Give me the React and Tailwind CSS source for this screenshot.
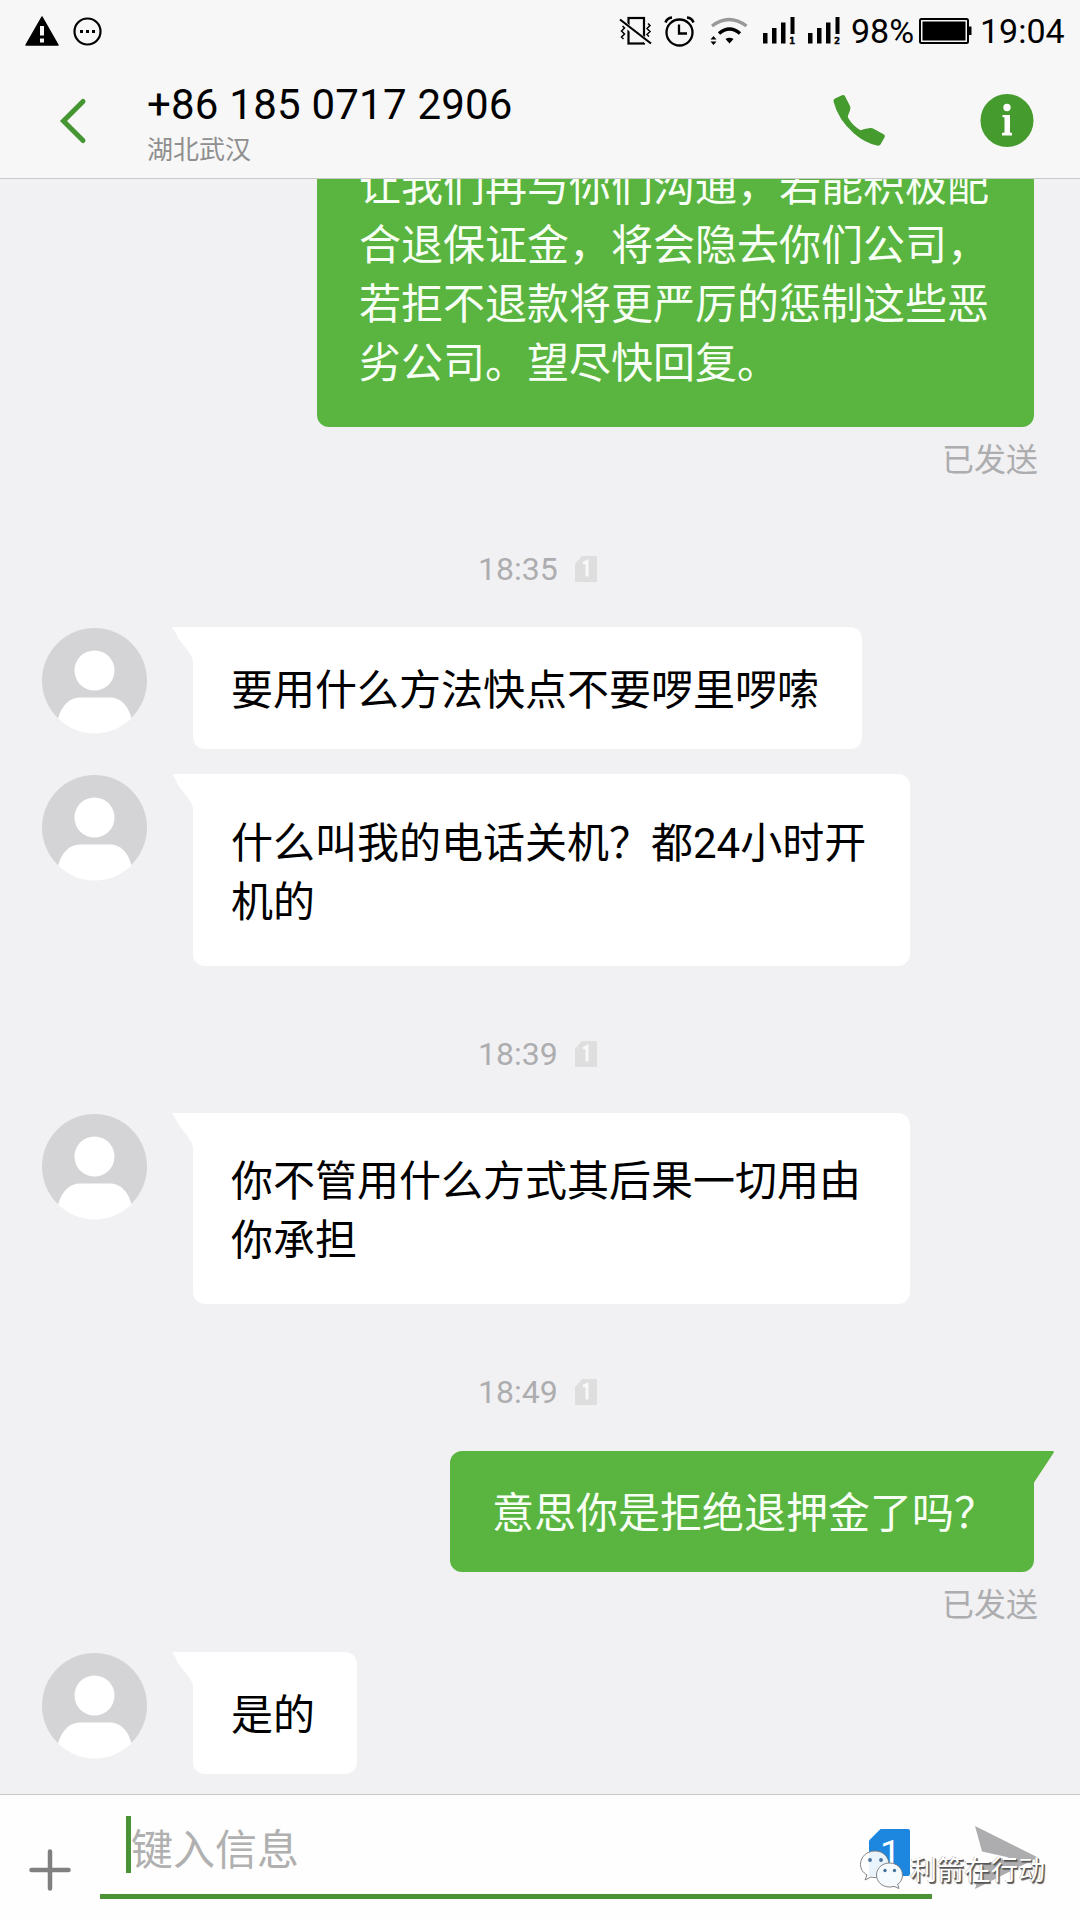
const messages = [
  {
    type: "out",
    text: "让我们再与你们沟通，若能积极配\n合退保证金，将会隐去你们公司，\n若拒不退款将更严厉的惩制这些恶\n劣公司。望尽快回复。",
    box: "-mt-[62px] w-[717px] h-[310px] pt-[40px] pl-[42px]",
  },
  { type: "time", text: "18:35", box: "mt-[72px]" },
  {
    type: "in",
    text: "要用什么方法快点不要啰里啰嗦",
    row: "mt-[41px]",
    box: "w-[669px] h-[122px] pt-[34px]",
  },
  {
    type: "in",
    text: "什么叫我的电话关机？都24小时开\n机的",
    row: "mt-[25px]",
    box: "w-[717px] h-[192px] pt-[40px]",
  },
  { type: "time", text: "18:39", box: "mt-[71px]" },
  {
    type: "in",
    text: "你不管用什么方式其后果一切用由\n你承担",
    row: "mt-[42px]",
    box: "w-[717px] h-[191px] pt-[39px]",
  },
  { type: "time", text: "18:49", box: "mt-[71px]" },
  {
    type: "out",
    text: "意思你是拒绝退押金了吗？",
    box: "mt-[42px] w-[584px] h-[121px] pt-[33px] pl-[42px]",
    tail: true,
  },
  {
    type: "in",
    text: "是的",
    row: "mt-[27px]",
    box: "w-[164px] h-[122px] pt-[34px]",
  },
];

function VibrateOff() {
  return (
    <svg width="34" height="30" viewBox="0 0 34 30" fill="none" stroke="#000">
      <rect x="9.5" y="2" width="15.5" height="25.5" strokeWidth="2.2" />
      <path d="M0 4 L31 28" stroke="#f7f7f7" strokeWidth="5" />
      <path d="M1 3.5 L32 27.5" strokeWidth="2.2" />
      <path d="M3.5 10l2 2-3 3 3 3-3 3 2 2M29 7.5l2 2-3 3 3 3-3 3 2 2" strokeWidth="1.5" />
    </svg>
  );
}

function AlarmClock() {
  return (
    <svg width="31" height="31" viewBox="0 0 31 31" fill="none" stroke="#000">
      <circle cx="15.5" cy="16.5" r="13" strokeWidth="2.3" />
      <path d="M15 8.5v9h8" strokeWidth="2.3" />
      <path d="M1.5 6.5Q3 2 8 1.5M29.5 6.5Q28 2 23 1.5" strokeWidth="2.6" />
    </svg>
  );
}

function Wifi() {
  return (
    <svg width="38" height="28" viewBox="0 0 38 28" fill="none">
      <path d="M2 9Q19-4 36.5 9" stroke="#999" strokeWidth="3.2" />
      <path d="M9 16.5Q19.5 7.5 30 16.5" stroke="#000" strokeWidth="3.6" />
      <path d="M15.5 22Q19.5 19.5 23.5 22L19.5 26.5Z" fill="#000" />
      <path d="M.5 22.5L3.5 19L6.5 22.5ZM.5 24.5H6.5L3.5 28Z" fill="#000" />
    </svg>
  );
}

function Signal({ sim }) {
  return (
    <svg width="34" height="28" viewBox="0 0 34 28" fill="#000">
      <rect x="1" y="16" width="4.5" height="10.5" />
      <rect x="10" y="11" width="4.5" height="15.5" />
      <rect x="19" y="5.5" width="4.5" height="21" />
      <rect x="28.5" y="0" width="4" height="17" />
      <text
        x="27.3"
        y="26.5"
        fontSize="9.5"
        fontWeight="700"
        fontFamily="DejaVu Sans Mono, monospace"
        stroke="#000"
        strokeWidth=".5"
      >
        {sim}
      </text>
    </svg>
  );
}

function Battery() {
  return (
    <svg width="53" height="26" viewBox="0 0 53 26">
      <rect x="1" y="1" width="48" height="24" rx="1.5" fill="none" stroke="#000" strokeWidth="2" />
      <rect x="3.5" y="3.5" width="43" height="19" fill="#000" />
      <rect x="49" y="8.5" width="3.5" height="8.5" fill="#000" />
    </svg>
  );
}

function StatusBar() {
  return (
    <div className="flex h-[62px] items-center pl-[25px] pr-[15px] text-[34px] leading-none text-black">
      <svg width="34" height="30" viewBox="0 0 34 30">
        <path d="M17 1 L33 29 H1 Z" fill="#000" stroke="#000" strokeWidth="1.5" strokeLinejoin="round" />
        <path d="M17 10v9.5M17 22.5v4" stroke="#f7f7f7" strokeWidth="4" />
      </svg>
      <svg className="ml-[14px]" width="29" height="29" viewBox="0 0 29 29">
        <circle cx="14.5" cy="14.5" r="13" fill="none" stroke="#000" strokeWidth="2.2" />
        <path d="M7 13h3v3H7zM13 13h3v3h-3zM19 13h3v3h-3z" fill="#000" />
      </svg>
      <div className="ml-auto flex items-center">
        <VibrateOff />
        <div className="ml-[11px]"><AlarmClock /></div>
        <div className="ml-[15px]"><Wifi /></div>
        <div className="ml-[14px]"><Signal sim="1" /></div>
        <div className="ml-[11px]"><Signal sim="2" /></div>
        <span className="ml-[10px] w-[63px]">98%</span>
        <div className="ml-[5px]"><Battery /></div>
        <span className="ml-[8px] w-[85px]">19:04</span>
      </div>
    </div>
  );
}

function Header() {
  return (
    <div className="flex h-[117px] border-b border-[#c9c9cb]">
      <svg className="ml-[59px] mt-[35px]" width="28" height="48" viewBox="0 0 28 48" fill="none">
        <path d="M24 4.500 L4.500 24 L24 43.500" stroke="#459532" strokeWidth="5" strokeLinecap="round" />
      </svg>
      <div className="ml-[60px] flex flex-col">
        <div className="mt-[18px] text-[42px] leading-[50px] tracking-[0.22px] text-black">+86 185 0717 2906</div>
        <div className="mt-[4px] text-[26px] leading-[32px] text-[#8f8f8f]">湖北武汉</div>
      </div>
      <svg className="ml-auto mt-[32px]" width="56" height="54" viewBox="0 0 56 54">
        <path
          d="M1.5 7.500Q1 5.500 3 4.500L10 1.200Q12 .500 13 2.200L18 12Q19 14.500 18 16.500L16 21.500Q15.500 23 16.500 24.500Q21 32 28.500 36.200L32.500 35Q36 34.500 38 34Q40 33.800 42 35L52 40.500Q53.500 41.500 52.500 43.500L48.500 50.500Q47.500 52 45 51.500Q33 49 22 39.500Q6 25.500 1.500 7.500Z"
          fill="#459b2e"
        />
      </svg>
      <svg className="ml-[92px] mr-[46px] mt-[31px]" width="54" height="54" viewBox="0 0 54 54">
        <circle cx="27" cy="27.500" r="26.500" fill="#459b2e" />
        <circle cx="27" cy="14.500" r="3.700" fill="#fff" />
        <path d="M22.500 22H30V39.500L32 40V42.500H22V40L24.500 39.500V24.500L22.500 24Z" fill="#fff" />
      </svg>
    </div>
  );
}

function Avatar() {
  return (
    <svg className="ml-[42px]" width="105" height="107" viewBox="0 0 105 107">
      <circle cx="52.5" cy="53.5" r="52.5" fill="#d4d4d6" />
      <circle cx="52.5" cy="43.5" r="20" fill="#fff" />
      <path d="M16 91.5C20 77 29 70.5 38 70.5H68C77 70.5 86 77 89.5 91.5Q73 106.5 52.5 106.5Q32 106.5 16 91.5Z" fill="#fff" />
    </svg>
  );
}

function SentBubble({ message }) {
  return (
    <div className="flex flex-col items-end pr-[46px]">
      <div
        className={`relative rounded-[12px] bg-[#59b440] text-[42px] leading-[59px] whitespace-pre text-[#f8fff4] ${message.box}`}
      >
        {message.text}
        {message.tail && (
          <svg className="absolute top-0 -right-[20px]" width="40" height="32" viewBox="0 0 40 32">
            <path d="M0 0H38.5Q40.5 0 39.5 2L20 31.5H0Z" fill="#59b440" />
          </svg>
        )}
      </div>
      <div className="mt-[13px] -mr-[4px] text-[32px] leading-[40px] text-[#adadaf]">已发送</div>
    </div>
  );
}

function ReceivedBubble({ message }) {
  return (
    <div className={`flex items-start ${message.row}`}>
      <Avatar />
      <div
        className={`relative ml-[46px] rounded-[12px] bg-white pl-[38px] text-[42px] leading-[59px] whitespace-pre text-black ${message.box}`}
      >
        <svg className="absolute top-0 -left-[21px]" width="40" height="34" viewBox="0 0 40 34">
          <path d="M0 0H40V34H21Q20 29 16 24L6 11Q3 4 0 0Z" fill="#fff" />
        </svg>
        <span className="relative">{message.text}</span>
      </div>
    </div>
  );
}

function TimeLabel({ message }) {
  return (
    <div className={`flex h-[34px] items-center pl-[478px] text-[32px] leading-[34px] text-[#adadaf] ${message.box}`}>
      <span className="w-[97px]">{message.text}</span>
      <svg width="22" height="26" viewBox="0 0 22 26">
        <path d="M7 0H22V26H0V8Z" fill="#dededf" />
        <path d="M8 7.5L12 5.5V20.5" fill="none" stroke="#f8f8f9" strokeWidth="3" />
      </svg>
    </div>
  );
}

function Composer() {
  return (
    <div className="relative flex h-[126px] border-t border-[#c9c9cb] bg-[#fefefe]">
      <svg className="ml-[29px] mt-[54px]" width="42" height="42" viewBox="0 0 42 42">
        <path d="M21 2.5V39.5M2.500 21H39.5" stroke="#808080" strokeWidth="4.5" strokeLinecap="round" />
      </svg>
      <div className="ml-[29px] flex h-[104px] w-[832px] border-b-[5px] border-[#4a9236]">
        <div className="ml-[26px] mt-[21px] h-[57px] w-[5px] bg-[#4a9236]" />
        <div className="mt-[26px] text-[42px] leading-[59px] text-[#b0b0b0]">键入信息</div>
        <svg className="ml-auto mr-[21px] mt-[34px]" width="42" height="48" viewBox="0 0 42 48">
          <path d="M11.5 0H39Q41 0 41 2V45Q41 47 39 47H2Q0 47 0 45V11.5Z" fill="#1d87df" />
          <text x="11" y="37" fontSize="37" fontFamily="Roboto, sans-serif" fill="#fff">1</text>
        </svg>
      </div>
      <svg className="ml-[43px] mt-[31px]" width="64" height="64" viewBox="0 0 64 64">
        <path d="M0 0L63 31.5L0 63L7 38.5L34 31.5L7 25.5Z" fill="#adadaf" />
      </svg>

      {/* account watermark */}
      <div className="absolute left-[859px] top-[54px] flex items-start">
        <svg width="46" height="42" viewBox="0 0 46 42">
          <g stroke="#777" strokeWidth=".9">
            <path d="M16 2C7.5 2 1.5 8 1.5 15.5C1.5 20 4 23.5 8 26L6 31L12 28Q14 28.5 16 28.5C25 28.5 30 22.5 30 15.5C30 8 24 2 16 2Z" fill="#fff" fillOpacity=".9" />
            <path d="M30.5 14C23 14 17.5 19.5 17.5 26C17.5 32.5 23 38 30.5 38Q33 38 35 37.3L40 39.5L38.7 35.2C42 33 43.5 30 43.5 26C43.5 19.5 38 14 30.5 14Z" fill="#f5faff" />
          </g>
          <g fill="#47729b">
            <circle cx="11" cy="11" r="1.9" />
            <circle cx="22" cy="11" r="1.9" />
            <circle cx="26" cy="21.5" r="1.7" />
            <circle cx="35.5" cy="21.5" r="1.7" />
          </g>
        </svg>
        <span className="ml-[5px] mt-[6px] text-[27px] leading-[32px] text-white [text-shadow:1px_1px_0_#555,1.5px_1.5px_1px_#666,-0.5px_0_0_#aaa]">
          利箭在行动
        </span>
      </div>
    </div>
  );
}

export default function App() {
  return (
    <div className="flex h-[1920px] w-[1080px] flex-col overflow-hidden bg-[#f7f7f7] font-['Roboto','Noto_Sans_CJK_SC',sans-serif]">
      <StatusBar />
      <Header />
      <div className="flex h-[1615px] flex-col overflow-hidden bg-[#f1f1f3]">
        {messages.map((message, i) => {
          if (message.type === "time") return <TimeLabel key={i} message={message} />;
          if (message.type === "out") return <SentBubble key={i} message={message} />;
          return <ReceivedBubble key={i} message={message} />;
        })}
      </div>
      <Composer />
    </div>
  );
}
